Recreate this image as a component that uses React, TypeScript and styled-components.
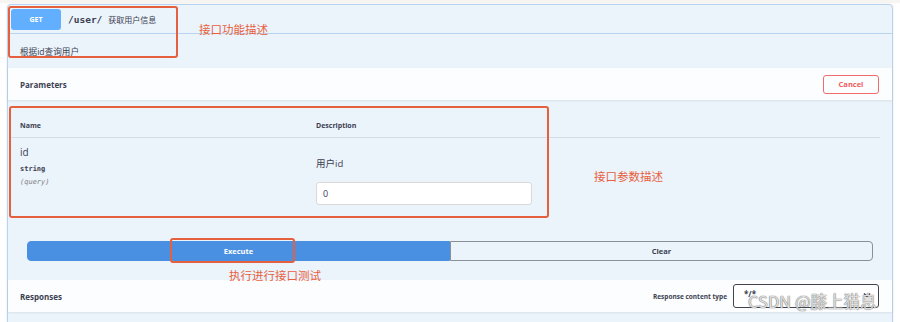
import React from "react";
import styled, { createGlobalStyle } from "styled-components";

const Global = createGlobalStyle`
  html, body { margin: 0; padding: 0; background: #fff; }
  body { font-family: "Open Sans", "Noto Sans CJK SC", sans-serif; color: #3b4151; }
`;

const Page = styled.div`
  position: relative;
  width: 900px;
  height: 322px;
  overflow: hidden;
  box-sizing: border-box;
  padding: 4px 7px 0 7px;
  background: linear-gradient(#f6f5f2 0, #f6f5f2 3px, #fff 3px);
`;

const OpBlock = styled.div`
  border: 1px solid #b8d3ef;
  border-radius: 4px;
  background: #ebf3fb;
  box-shadow: 0 0 2px rgba(0, 0, 0, 0.12);
  height: 330px;
`;

const Summary = styled.div`
  display: flex;
  align-items: center;
  height: 28px;
  padding: 0 3px;
  border-bottom: 1px solid #b8d3ef;
`;

const Method = styled.span`
  display: flex;
  align-items: center;
  justify-content: center;
  width: 50px;
  height: 21px;
  border-radius: 3px;
  background: #61affe;
  color: #fff;
  font-size: 7px;
  font-weight: 700;
`;

const Path = styled.span`
  margin-left: 7px;
  font-family: "DejaVu Sans Mono", monospace;
  font-size: 9.5px;
  font-weight: 600;
  color: #3b4151;
`;

const Short = styled.span`
  margin-left: 6px;
  font-size: 8px;
  color: #3b4151;
`;

const Desc = styled.div`
  display: flex;
  align-items: center;
  height: 34px;
  padding-left: 12px;
  font-size: 8.6px;
  color: #3b4151;
`;

const SectionHeader = styled.div`
  display: flex;
  align-items: center;
  justify-content: space-between;
  height: 32px;
  padding: 0 13px 0 12px;
  background: rgba(255, 255, 255, 0.82);
  box-shadow: 0 1px 2px rgba(0, 0, 0, 0.08);
`;

const SectionTitle = styled.span`
  font-size: 8px;
  font-weight: 700;
  color: #3b4151;
`;

const CancelButton = styled.button`
  width: 56px;
  height: 19px;
  border: 1.5px solid #f26b6b;
  border-radius: 3px;
  background: transparent;
  color: #f05a5a;
  font-family: "Open Sans", sans-serif;
  font-size: 7.5px;
  font-weight: 700;
  padding: 0;
`;

const ParamsBody = styled.div`
  padding: 14px 12px 0 2px;
`;

const Table = styled.div`
  display: grid;
  grid-template-columns: 296px 1fr;
`;

const HeadCell = styled.div`
  height: 23px;
  display: flex;
  align-items: center;
  padding-left: 10px;
  font-size: 7px;
  font-weight: 700;
  color: #3b4151;
  border-bottom: 1px solid #d3dce7;
`;

const Cell = styled.div`
  padding: 8px 0 0 10px;
  height: 70px;
`;

const ParamName = styled.div`
  font-size: 10px;
  font-weight: 400;
  line-height: 12px;
  color: #3b4151;
`;

const ParamType = styled.div`
  margin-top: 7px;
  font-family: "DejaVu Sans Mono", monospace;
  font-size: 7px;
  font-weight: 700;
  color: #3b4151;
`;

const ParamIn = styled.div`
  margin-top: 5px;
  font-family: "DejaVu Sans Mono", monospace;
  font-size: 7px;
  font-style: italic;
  color: #808080;
`;

const ParamDesc = styled.div`
  margin-top: 10px;
  font-size: 9.5px;
  color: #3b4151;
`;

const Input = styled.div`
  margin-top: 12px;
  box-sizing: border-box;
  width: 216px;
  height: 23px;
  display: flex;
  align-items: center;
  padding-left: 6px;
  background: #fff;
  border: 1px solid #d9d9d9;
  border-radius: 3px;
  font-size: 9px;
  color: #3b4151;
`;

const ExecuteWrap = styled.div`
  display: flex;
  padding: 25px 19px 19px 19px;
`;

const ExecuteButton = styled.div`
  flex: 1;
  height: 18px;
  display: flex;
  align-items: center;
  justify-content: center;
  background: #4990e2;
  border: 1px solid #4990e2;
  border-radius: 4px 0 0 4px;
  color: #fff;
  font-size: 7.5px;
  font-weight: 700;
`;

const ClearButton = styled.div`
  flex: 1;
  box-sizing: border-box;
  height: 20px;
  display: flex;
  align-items: center;
  justify-content: center;
  border: 1.5px solid #8b9098;
  border-radius: 0 4px 4px 0;
  color: #3b4151;
  font-size: 7.5px;
  font-weight: 700;
`;

const Right = styled.div`
  display: flex;
  align-items: center;
  gap: 6px;
`;

const Label = styled.span`
  font-size: 6.5px;
  font-weight: 700;
  color: #3b4151;
`;

const Select = styled.div`
  box-sizing: border-box;
  width: 146px;
  height: 24px;
  display: flex;
  align-items: flex-start;
  justify-content: space-between;
  padding: 3px 7px 0 10px;
  border: 1.5px solid #41444e;
  border-radius: 3px;
  background: #fff;
  font-size: 8px;
  font-weight: 700;
  color: #3b4151;
`;

const Chevron = styled.svg`
  margin-top: 4px;
  width: 8px;
  height: 6px;
`;

const Annot = styled.div<{ $x: number; $y: number; $w: number; $h: number }>`
  position: absolute;
  left: ${(p) => p.$x}px;
  top: ${(p) => p.$y}px;
  width: ${(p) => p.$w}px;
  height: ${(p) => p.$h}px;
  box-sizing: border-box;
  border: 2px solid #e4603f;
  border-radius: 3px;
  pointer-events: none;
`;

const Note = styled.div<{ $x: number; $y: number }>`
  position: absolute;
  left: ${(p) => p.$x}px;
  top: ${(p) => p.$y}px;
  font-family: "Noto Sans CJK SC", sans-serif;
  font-size: 11.5px;
  line-height: 14px;
  color: #e8603c;
  white-space: nowrap;
`;

const Watermark = styled.div`
  position: absolute;
  left: 748px;
  top: 291px;
  font-family: "Noto Sans CJK SC", "Liberation Sans", sans-serif;
  font-size: 16.5px;
  line-height: 20px;
  color: rgba(255, 255, 255, 0.8);
  text-shadow: 0 0 1px #666, 0 0 1px #666;
  white-space: nowrap;
`;

export default function App() {
  return (
    <>
      <Global />
      <Page>
        <OpBlock>
          <Summary>
            <Method>GET</Method>
            <Path>/user/</Path>
            <Short>获取用户信息</Short>
          </Summary>
          <Desc>根据id查询用户</Desc>
          <SectionHeader>
            <SectionTitle>Parameters</SectionTitle>
            <CancelButton>Cancel</CancelButton>
          </SectionHeader>
          <ParamsBody>
            <Table>
              <HeadCell>Name</HeadCell>
              <HeadCell>Description</HeadCell>
              <Cell>
                <ParamName>id</ParamName>
                <ParamType>string</ParamType>
                <ParamIn>(query)</ParamIn>
              </Cell>
              <Cell>
                <ParamDesc>用户id</ParamDesc>
                <Input>0</Input>
              </Cell>
            </Table>
          </ParamsBody>
          <ExecuteWrap>
            <ExecuteButton>Execute</ExecuteButton>
            <ClearButton>Clear</ClearButton>
          </ExecuteWrap>
          <SectionHeader>
            <SectionTitle>Responses</SectionTitle>
            <Right>
              <Label>Response content type</Label>
              <Select>
                <span>*/*</span>
                <Chevron viewBox="0 0 8 6">
                  <path d="M1 1.5 L4 4.5 L7 1.5" fill="none" stroke="#3b4151" strokeWidth="1.4" />
                </Chevron>
              </Select>
            </Right>
          </SectionHeader>
        </OpBlock>
        <Annot $x={8} $y={6} $w={170} $h={52} />
        <Annot $x={9} $y={106} $w={540} $h={112} />
        <Annot $x={170} $y={238} $w={125} $h={25} />
        <Note $x={199} $y={22}>接口功能描述</Note>
        <Note $x={594} $y={169}>接口参数描述</Note>
        <Note $x={229} $y={268}>执行进行接口测试</Note>
        <Watermark>CSDN @膝上猫息</Watermark>
      </Page>
    </>
  );
}
